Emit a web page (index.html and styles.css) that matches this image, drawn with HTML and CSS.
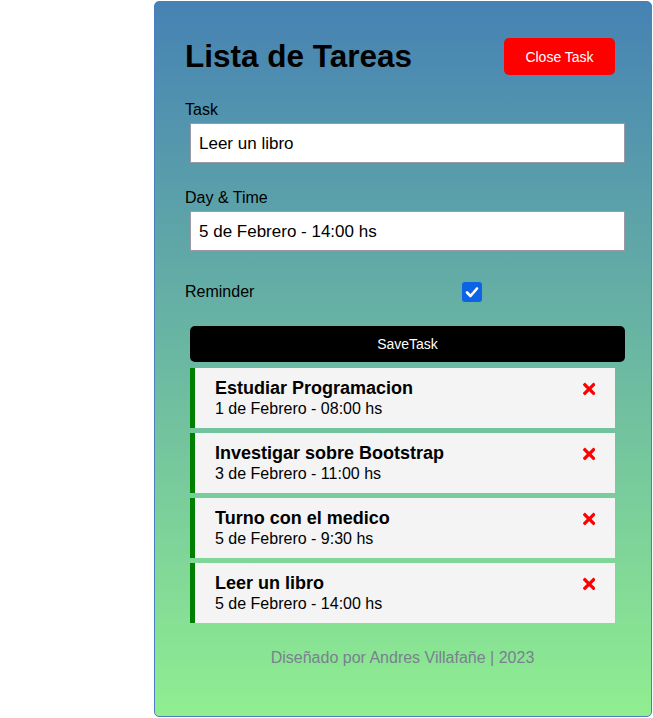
FILE: index.html
```html
<!DOCTYPE html>
<html lang="es">
<head>
<meta charset="utf-8">
<title>Lista de Tareas</title>
<link rel="stylesheet" href="styles.css">
</head>
<body>
<div class="container">
  <header class="header">
    <h1>Lista de Tareas</h1>
    <button class="btn btn-close">Close Task</button>
  </header>
  <form class="add-form">
    <div class="form-control">
      <label>Task</label>
      <input type="text" value="Leer un libro">
    </div>
    <div class="form-control">
      <label>Day &amp; Time</label>
      <input type="text" value="5 de Febrero - 14:00 hs">
    </div>
    <div class="form-control form-control-check">
      <label>Reminder</label>
      <span class="check-wrap">
        <span class="checkbox" role="checkbox" aria-checked="true">
          <svg viewBox="0 0 20 20" width="20" height="20"><path d="M5 10.5 L8.5 14 L15 6.5" fill="none" stroke="#fff" stroke-width="2.6" stroke-linecap="round" stroke-linejoin="round"/></svg>
        </span>
      </span>
    </div>
    <button type="button" class="btn btn-block">SaveTask</button>
  </form>
  <div class="tasks">
    <div class="task">
      <h3>Estudiar Programacion <svg class="x" viewBox="0 0 352 512"><path d="M242.72 256l100.07-100.07c12.28-12.28 12.28-32.19 0-44.48l-22.24-22.24c-12.28-12.28-32.19-12.28-44.48 0L176 189.28 75.930 89.21c-12.28-12.28-32.19-12.28-44.48 0L9.21 111.45c-12.28 12.28-12.28 32.19 0 44.48L109.28 256 9.21 356.07c-12.28 12.28-12.28 32.19 0 44.48l22.24 22.24c12.28 12.28 32.2 12.28 44.48 0L176 322.72l100.07 100.07c12.28 12.28 32.2 12.28 44.48 0l22.24-22.24c12.28-12.28 12.28-32.19 0-44.48L242.72 256z"/></svg></h3>
      <p>1 de Febrero - 08:00 hs</p>
    </div>
    <div class="task">
      <h3>Investigar sobre Bootstrap <svg class="x" viewBox="0 0 352 512"><path d="M242.72 256l100.07-100.07c12.28-12.28 12.28-32.19 0-44.48l-22.24-22.24c-12.28-12.28-32.19-12.28-44.48 0L176 189.28 75.930 89.21c-12.28-12.28-32.19-12.28-44.48 0L9.21 111.45c-12.28 12.28-12.28 32.19 0 44.48L109.28 256 9.21 356.07c-12.28 12.28-12.280 32.19 0 44.48l22.24 22.24c12.28 12.28 32.2 12.28 44.48 0L176 322.72l100.07 100.07c12.28 12.28 32.2 12.28 44.48 0l22.24-22.24c12.28-12.28 12.28-32.19 0-44.48L242.72 256z"/></svg></h3>
      <p>3 de Febrero - 11:00 hs</p>
    </div>
    <div class="task">
      <h3>Turno con el medico <svg class="x" viewBox="0 0 352 512"><path d="M242.72 256l100.07-100.07c12.28-12.28 12.28-32.19 0-44.48l-22.24-22.24c-12.28-12.28-32.19-12.28-44.48 0L176 189.28 75.930 89.21c-12.28-12.28-32.19-12.28-44.48 0L9.21 111.45c-12.28 12.28-12.28 32.19 0 44.48L109.28 256 9.21 356.07c-12.28 12.28-12.28 32.19 0 44.48l22.24 22.24c12.28 12.28 32.2 12.28 44.48 0L176 322.72l100.07 100.07c12.28 12.28 32.2 12.28 44.48 0l22.24-22.24c12.28-12.28 12.28-32.19 0-44.48L242.72 256z"/></svg></h3>
      <p>5 de Febrero - 9:30 hs</p>
    </div>
    <div class="task">
      <h3>Leer un libro <svg class="x" viewBox="0 0 352 512"><path d="M242.72 256l100.07-100.07c12.28-12.28 12.28-32.19 0-44.48l-22.24-22.24c-12.28-12.28-32.19-12.28-44.48 0L176 189.28 75.930 89.21c-12.28-12.28-32.19-12.28-44.48 0L9.21 111.45c-12.28 12.28-12.28 32.19 0 44.48L109.28 256 9.21 356.07c-12.28 12.28-12.28 32.19 0 44.48l22.24 22.24c12.28 12.28 32.2 12.28 44.48 0L176 322.72l100.07 100.07c12.28 12.28 32.2 12.28 44.48 0l22.24-22.24c12.28-12.28 12.28-32.19 0-44.48L242.72 256z"/></svg></h3>
      <p>5 de Febrero - 14:00 hs</p>
    </div>
  </div>
  <footer class="footer">Diseñado por Andres Villafañe | 2023</footer>
</div>
</body>
</html>
```

FILE: styles.css
```css
* {
  box-sizing: border-box;
}

body {
  margin: 0;
  background: #fff;
  font-family: "Liberation Sans", Arial, sans-serif;
}

.container {
  width: 498px;
  min-height: 716px;
  margin: 1px 0 0 154px;
  padding: 36px 31px 30px 30px;
  border: 1px solid #4a7fbf;
  border-radius: 5px;
  background: linear-gradient(#4682b4, #90ee90);
}

.header {
  display: flex;
  justify-content: space-between;
  align-items: center;
  height: 37px;
  margin-bottom: 26px;
}

.header h1 {
  margin: 0;
  font-size: 31.5px;
  line-height: 37px;
  font-weight: bold;
  color: #000;
}

.btn {
  display: inline-block;
  border: none;
  border-radius: 5px;
  color: #fff;
  font-family: "Liberation Sans", Arial, sans-serif;
  font-size: 14px;
  cursor: pointer;
}

.btn-close {
  width: 111px;
  height: 37px;
  margin-right: 5px;
  background: #ff0000;
}

.form-control {
  display: flex;
  flex-direction: column;
  margin-bottom: 21px;
}

.form-control label {
  display: block;
  font-size: 16px;
  line-height: 18px;
  color: #000;
}

.form-control input {
  display: block;
  width: 100%;
  height: 40px;
  margin: 4px 5px 5px 5px;
  padding: 1px 8px 0 8px;
  border: 1px solid #9a9aa6;
  background: #fff;
  font-family: "Liberation Sans", Arial, sans-serif;
  font-size: 17px;
  color: #000;
  outline: none;
}

.form-control-check {
  flex-direction: row;
  align-items: center;
  height: 30px;
  margin-top: 5px;
  margin-bottom: 19px;
}

.form-control-check label {
  width: 277px;
}

.check-wrap {
  display: flex;
  align-items: center;
}

.checkbox {
  display: flex;
  width: 20px;
  height: 20px;
  border-radius: 3px;
  background: #0d63e5;
}

.btn-block {
  display: block;
  width: 100%;
  height: 36px;
  margin: 0 5px 6px 5px;
  background: #000;
}

.tasks {
  display: flex;
  flex-direction: column;
  gap: 5px;
}

.task {
  margin: 0 5px;
  padding: 10px 20px;
  border-left: 5px solid #008000;
  background: #f4f4f4;
}

.task h3 {
  display: flex;
  justify-content: space-between;
  align-items: center;
  margin: 0;
  font-size: 18px;
  line-height: 21px;
  font-weight: bold;
  color: #000;
}

.task h3 .x {
  width: 12.4px;
  height: 18px;
  fill: #ff0000;
}

.task p {
  margin: 0;
  font-size: 16px;
  line-height: 19px;
  color: #000;
}

.footer {
  margin-top: 26px;
  text-align: center;
  font-size: 16px;
  line-height: 18px;
  color: #7a8090;
}
```
